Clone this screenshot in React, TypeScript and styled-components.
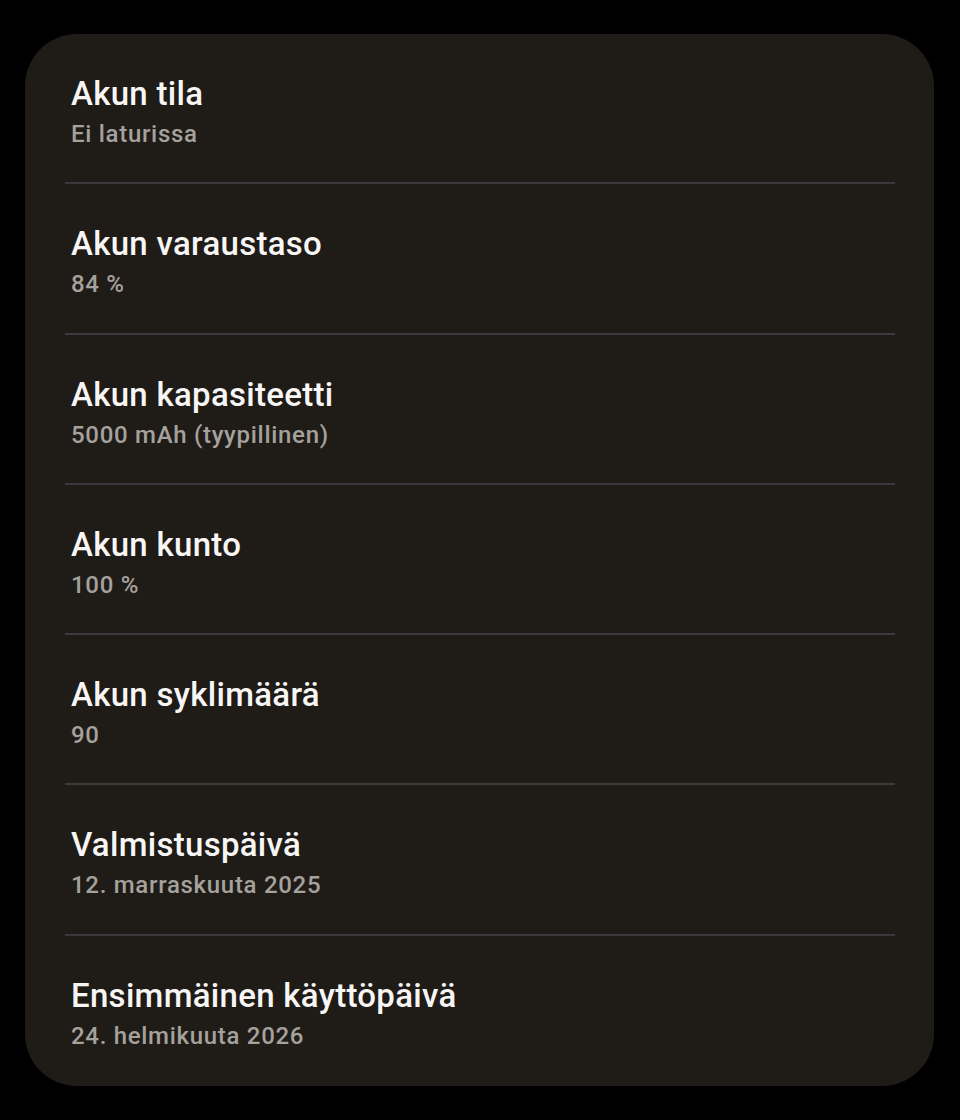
import React from 'react';
import styled, { createGlobalStyle } from 'styled-components';

const GlobalStyle = createGlobalStyle`
    html, body {
        margin: 0;
        padding: 0;
        background: #000000;
    }

    body {
        font-family: Roboto, "Noto Sans", "Liberation Sans", sans-serif;
        -webkit-font-smoothing: antialiased;
    }
`;

const Page = styled.div`
    display: flex;
    justify-content: flex-start;
    padding: 34px 26px 35px 25px;
    min-height: 1120px;
    box-sizing: border-box;
`;

const Card = styled.section`
    display: flex;
    flex-direction: column;
    width: 909px;
    box-sizing: border-box;
    padding: 0 39px 0 40px;
    background: #1f1b17;
    border-radius: 52px;
`;

const Row = styled.div<{ $last?: boolean }>`
    display: flex;
    flex-direction: column;
    justify-content: flex-start;
    height: 150.3px;
    box-sizing: border-box;
    padding: 42px 0 0 6px;
    border-bottom: ${({ $last }) => ($last ? 'none' : '2px solid #3a393b')};
`;

const Title = styled.div`
    color: #f7f6f5;
    font-size: 33px;
    font-weight: 500;
    line-height: 36px;
    letter-spacing: 0.3px;
`;

const Value = styled.div`
    margin-top: 8px;
    color: #a5a19d;
    font-size: 24px;
    font-weight: 500;
    line-height: 28px;
    letter-spacing: 0.7px;
`;

const items = [
    { title: 'Akun tila', value: 'Ei laturissa' },
    { title: 'Akun varaustaso', value: '84 %' },
    { title: 'Akun kapasiteetti', value: '5000 mAh (tyypillinen)' },
    { title: 'Akun kunto', value: '100 %' },
    { title: 'Akun syklimäärä', value: '90' },
    { title: 'Valmistuspäivä', value: '12. marraskuuta 2025' },
    { title: 'Ensimmäinen käyttöpäivä', value: '24. helmikuuta 2026' },
];

export default function App() {
    return (
        <>
            <GlobalStyle />
            <Page>
                <Card>
                    {items.map((item, i) => (
                        <Row key={item.title} $last={i === items.length - 1}>
                            <Title>{item.title}</Title>
                            <Value>{item.value}</Value>
                        </Row>
                    ))}
                </Card>
            </Page>
        </>
    );
}
